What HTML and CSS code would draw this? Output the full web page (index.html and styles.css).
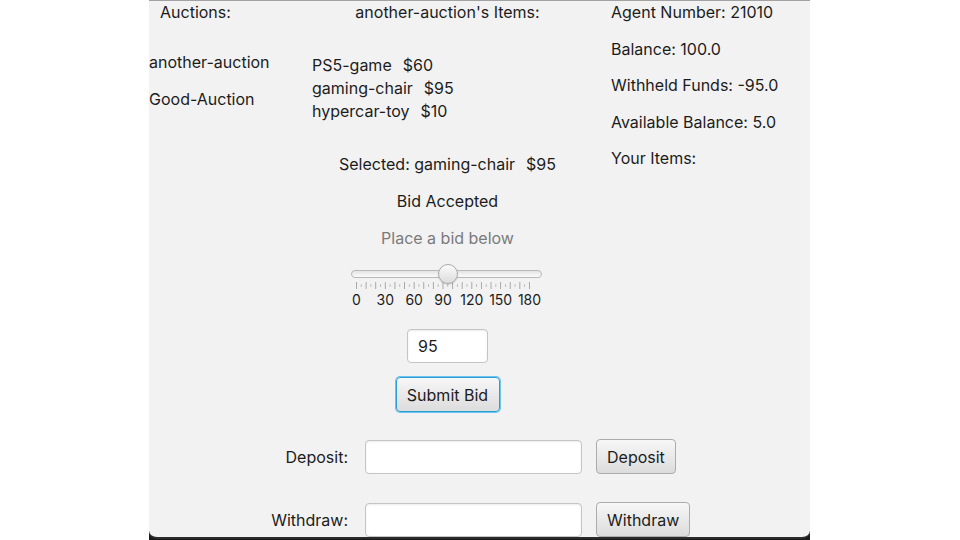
FILE: index.html
```html
<!DOCTYPE html>
<html>
<head>
<meta charset="utf-8">
<link rel="stylesheet" href="styles.css">
</head>
<body>
<div class="frame">
  <div class="window">
    <div class="top">
      <div class="col-left">
        <div class="head-left">Auctions:</div>
        <ul class="auctions">
          <li>another-auction</li>
          <li>Good-Auction</li>
        </ul>
      </div>
      <div class="col-mid">
        <div class="head-mid">another-auction's Items:</div>
        <ul class="items">
          <li>PS5-game<span class="price">$60</span></li>
          <li>gaming-chair<span class="price">$95</span></li>
          <li>hypercar-toy<span class="price">$10</span></li>
        </ul>
        <div class="selected">Selected: gaming-chair<span class="price">$95</span></div>
        <div class="status">Bid Accepted</div>
        <div class="hint">Place a bid below</div>
        <div class="slider">
          <div class="track"><div class="thumb"></div></div>
          <div class="ticks"></div>
          <div class="labels">
            <span>0</span><span>30</span><span>60</span><span>90</span><span>120</span><span>150</span><span>180</span>
          </div>
        </div>
        <input class="field bid" type="text" value="95">
        <button class="btn focused">Submit Bid</button>
      </div>
      <div class="col-right">
        <div>Agent Number: 21010</div>
        <div>Balance: 100.0</div>
        <div>Withheld Funds: -95.0</div>
        <div>Available Balance: 5.0</div>
        <div>Your Items:</div>
      </div>
    </div>
    <div class="funds">
      <div class="fund-row">
        <label class="fund-label">Deposit:</label>
        <input class="field wide" type="text">
        <button class="btn">Deposit</button>
      </div>
      <div class="fund-row">
        <label class="fund-label">Withdraw:</label>
        <input class="field wide" type="text">
        <button class="btn">Withdraw</button>
      </div>
    </div>
  </div>
</div>
</body>
</html>
```

FILE: styles.css
```css
html, body {
  margin: 0;
  padding: 0;
  background: #ffffff;
}

body {
  width: 960px;
  height: 540px;
  overflow: hidden;
  font-family: "Inter", "Noto Sans", sans-serif;
  font-size: 16px;
  color: #1c1c1c;
}

.frame {
  margin-left: 149px;
  width: 661px;
  height: 540px;
  background: linear-gradient(to bottom, #ffffff 528px, #1a1a1a 528px);
}

.window {
  box-sizing: border-box;
  width: 661px;
  height: 539px;
  background: #f2f2f2;
  border-top: 1px solid #a2a2a2;
  border-bottom: 2px solid #2b2b2b;
  border-radius: 0 0 8px 8px;
  padding-top: 1px;
  overflow: hidden;
}

.top {
  display: grid;
  grid-template-columns: 151px 295px 1fr;
  line-height: 20px;
}

ul {
  list-style: none;
  margin: 0;
  padding: 0;
}

.head-left {
  padding-left: 11px;
}

.auctions {
  margin-top: 30px;
}

.auctions li + li {
  margin-top: 17px;
}

.col-mid {
  display: flex;
  flex-direction: column;
  align-items: center;
}

.head-mid {
  text-align: center;
}

.items {
  align-self: stretch;
  padding-left: 12px;
  margin-top: 32px;
  line-height: 23px;
}

.price {
  margin-left: 11px;
}

.selected {
  margin-top: 31px;
}

.status {
  margin-top: 17px;
}

.hint {
  margin-top: 17px;
  color: #7b7b7b;
}

.slider {
  margin-top: 15px;
  margin-right: 2px;
  width: 191px;
  display: flex;
  flex-direction: column;
  align-items: flex-start;
}

.track {
  position: relative;
  box-sizing: border-box;
  margin-top: 7px;
  width: 191px;
  height: 8px;
  border: 1px solid #b8b8b8;
  border-radius: 4px;
  background: linear-gradient(to bottom, #e4e4e4, #fbfbfb);
}

.thumb {
  position: absolute;
  left: 86px;
  top: -7px;
  box-sizing: border-box;
  width: 20px;
  height: 20px;
  border-radius: 50%;
  border: 1px solid #a9a9a9;
  background: linear-gradient(to bottom, #fbfbfb, #dcdcdc);
  box-shadow: 0 1px 1px rgba(0, 0, 0, 0.12);
}

.ticks {
  margin-top: 4px;
  margin-left: 5px;
  width: 174px;
  height: 7px;
  background-image:
    linear-gradient(to right, #a6a6a6 1px, transparent 1px),
    linear-gradient(to right, #bdbdbd 1px, transparent 1px);
  background-size: 9.611px 7px, 9.611px 3px;
  background-position: 0 0, 4.8px 2px;
  background-repeat: repeat-x;
}

.labels {
  margin-left: 5px;
  width: 174px;
  height: 18px;
  margin-top: 2px;
  display: flex;
  justify-content: space-between;
  font-size: 14px;
  line-height: 18px;
  color: #1c1c1c;
}

.labels span {
  width: 1px;
  display: flex;
  justify-content: center;
  white-space: nowrap;
}

.field {
  box-sizing: border-box;
  height: 34px;
  border: 1px solid #c4c4c4;
  border-radius: 4px;
  background: #ffffff;
  box-shadow: inset 0 1px 2px rgba(0, 0, 0, 0.08);
  font-family: inherit;
  font-size: 16px;
  color: #1c1c1c;
  padding: 0 10px;
  outline: none;
}

.bid {
  width: 81px;
  margin-top: 20px;
}

.btn {
  box-sizing: border-box;
  height: 35px;
  padding: 0 10px;
  border: 1px solid #acacac;
  border-radius: 4px;
  background: linear-gradient(to bottom, #f7f7f7, #dcdcdc);
  font-family: inherit;
  font-size: 16px;
  color: #1c1c1c;
}

.focused {
  margin-top: 14px;
  width: 104px;
  border: 1px solid #2a9fd6;
  box-shadow: 0 0 0 1px #6ec3ea;
}

.col-right {
  padding-left: 16px;
  display: flex;
  flex-direction: column;
  gap: 16.5px;
}

.funds {
  margin-top: 27px;
  display: flex;
  flex-direction: column;
  gap: 28px;
}

.fund-row {
  display: flex;
  align-items: center;
}

.fund-label {
  width: 199px;
  text-align: right;
}

.wide {
  width: 217px;
  margin-left: 17px;
}

.fund-row .btn {
  margin-left: 14px;
}
```
